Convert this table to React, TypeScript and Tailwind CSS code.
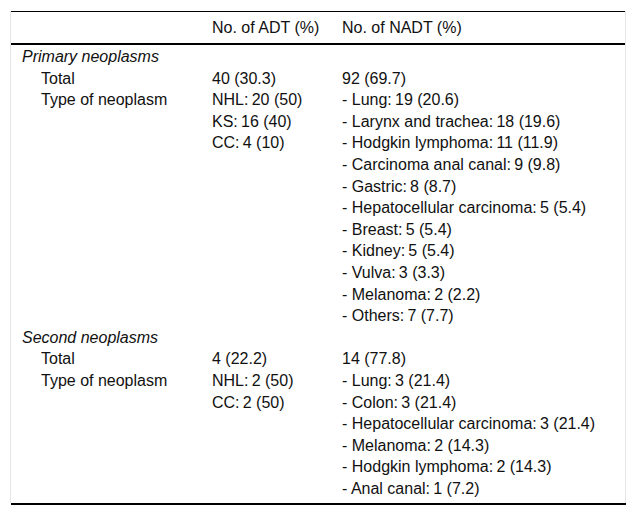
import React from "react";

type Row =
  | { kind: "section"; label: string }
  | { kind: "row"; label: string; adt: string[]; nadt: string[] };

const rows: Row[] = [
  { kind: "section", label: "Primary neoplasms" },
  { kind: "row", label: "Total", adt: ["40 (30.3)"], nadt: ["92 (69.7)"] },
  {
    kind: "row",
    label: "Type of neoplasm",
    adt: ["NHL:\u200920 (50)", "KS:\u200916 (40)", "CC:\u20094 (10)"],
    nadt: [
      "- Lung:\u200919 (20.6)",
      "- Larynx and trachea:\u200918 (19.6)",
      "- Hodgkin lymphoma:\u200911 (11.9)",
      "- Carcinoma anal canal:\u20099 (9.8)",
      "- Gastric:\u20098 (8.7)",
      "- Hepatocellular carcinoma:\u20095 (5.4)",
      "- Breast:\u20095 (5.4)",
      "- Kidney:\u20095 (5.4)",
      "- Vulva:\u20093 (3.3)",
      "- Melanoma:\u20092 (2.2)",
      "- Others:\u20097 (7.7)",
    ],
  },
  { kind: "section", label: "Second neoplasms" },
  { kind: "row", label: "Total", adt: ["4 (22.2)"], nadt: ["14 (77.8)"] },
  {
    kind: "row",
    label: "Type of neoplasm",
    adt: ["NHL:\u20092 (50)", "CC:\u20092 (50)"],
    nadt: [
      "- Lung:\u20093 (21.4)",
      "- Colon:\u20093 (21.4)",
      "- Hepatocellular carcinoma:\u20093 (21.4)",
      "- Melanoma:\u20092 (14.3)",
      "- Hodgkin lymphoma:\u20092 (14.3)",
      "- Anal canal:\u20091 (7.2)",
    ],
  },
];

export default function App() {
  return (
    <div
      className="w-[637px] h-[517px] bg-white text-[#111] text-[16px] pt-[11px] pl-[10px]"
      style={{ fontFamily: '"Liberation Sans", Arial, sans-serif' }}
    >
      <div className="w-[616px] border-l border-r border-[#e6e6e6]">
        <div className="border-t border-black h-[32px] grid grid-cols-[201px_130px_1fr] items-center leading-[21.6px]">
          <div />
          <div>No. of ADT (%)</div>
          <div>No. of NADT (%)</div>
        </div>
        <div className="border-t-2 border-black pt-[1px] pb-[4px] leading-[21.6px]">
          {rows.map((r, i) =>
            r.kind === "section" ? (
              <div key={i} className="pl-[11px] italic">
                {r.label}
              </div>
            ) : (
              <div key={i} className="grid grid-cols-[201px_130px_1fr]">
                <div className="pl-[30px]">{r.label}</div>
                <div>
                  {r.adt.map((t, j) => (
                    <div key={j}>{t}</div>
                  ))}
                </div>
                <div>
                  {r.nadt.map((t, j) => (
                    <div key={j}>{t}</div>
                  ))}
                </div>
              </div>
            )
          )}
        </div>
      </div>
      <div className="w-[615px] ml-[1px] h-[2px] bg-black" />
    </div>
  );
}
